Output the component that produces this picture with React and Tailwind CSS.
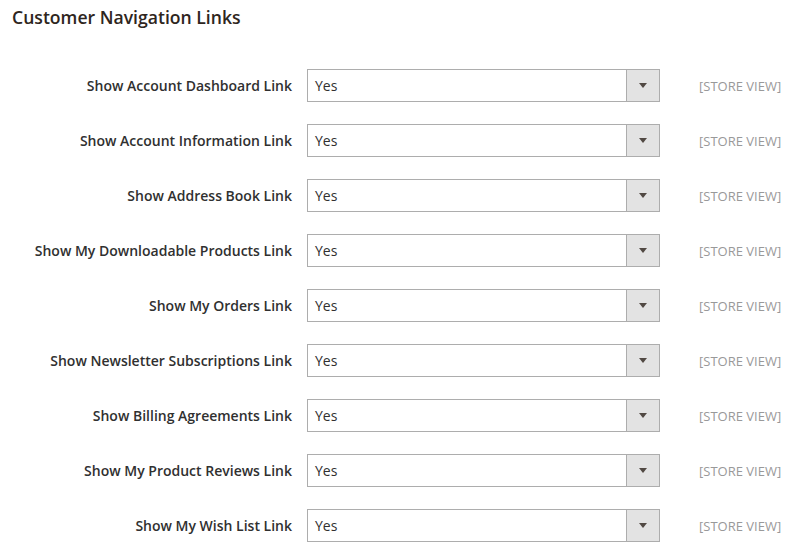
import React from "react";

const rows = [
  "Show Account Dashboard Link",
  "Show Account Information Link",
  "Show Address Book Link",
  "Show My Downloadable Products Link",
  "Show My Orders Link",
  "Show Newsletter Subscriptions Link",
  "Show Billing Agreements Link",
  "Show My Product Reviews Link",
  "Show My Wish List Link",
];

function SelectBox() {
  return (
    <div className="flex h-[33px] w-[353px] border border-[#adadad] bg-white">
      <div className="flex flex-1 items-center pl-[7px] text-[14px] text-[#303030]">Yes</div>
      <div className="flex w-[33px] items-center justify-center border-l border-[#adadad] bg-[#e3e3e3]">
        <svg width="8" height="5" viewBox="0 0 8 5">
          <path d="M0 0 H8 L4 5 Z" fill="#514943" />
        </svg>
      </div>
    </div>
  );
}

export default function App() {
  return (
    <div className="h-[544px] w-[786px] bg-white font-['Open_Sans',sans-serif]">
      <h2 className="pl-[12px] pt-[5px] text-[17.6px] font-semibold leading-[24px] text-[#2e2520]">
        Customer Navigation Links
      </h2>
      <div className="mt-[40px] flex flex-col gap-[22px]">
        {rows.map((label) => (
          <div key={label} className="flex items-center">
            <div className="w-[292px] text-right text-[14px] font-semibold text-[#303030]">{label}</div>
            <div className="ml-[15px]">
              <SelectBox />
            </div>
            <div className="ml-[39px] pt-[2px] text-[13px] text-[#999999]">[STORE VIEW]</div>
          </div>
        ))}
      </div>
    </div>
  );
}
